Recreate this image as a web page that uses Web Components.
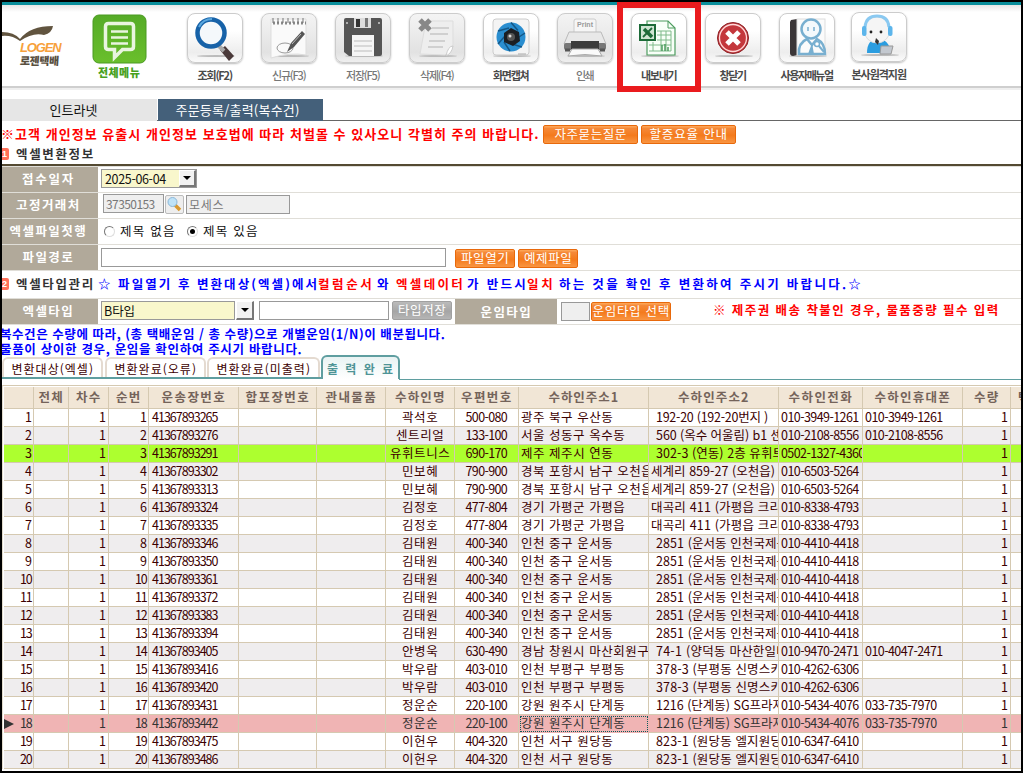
<!DOCTYPE html>
<html lang="ko">
<head>
<meta charset="utf-8">
<title>로젠택배 - 주문등록/출력</title>
<style>
html,body{margin:0;padding:0;background:#000;overflow:hidden}
body{font:12px/1 "Liberation Sans","Noto Sans CJK KR",sans-serif;color:#111}
</style>
</head>
<body>
<logen-app></logen-app>
<script>
const K = 'font-family:"Noto Sans CJK KR",sans-serif;';
function define(name, html, init) {
  const t = document.createElement('template');
  t.innerHTML = html;
  customElements.define(name, class extends HTMLElement {
    connectedCallback() {
      if (this.shadowRoot) return;
      this.attachShadow({mode: 'open'}).appendChild(t.content.cloneNode(true));
      if (init) init(this, this.shadowRoot);
    }
  });
}

/* Text spread over a fixed width through its letter spacing */
define('fit-text', `<style>:host{display:block;flex:none;white-space:pre;line-height:16px}span{display:inline-block}</style><span><slot></slot></span>`, (el, r) => {
  const w = +el.getAttribute('w');
  const s = r.querySelector('span');
  const n = [...el.textContent].length;
  if (n > 1) s.style.letterSpacing = ((w - s.getBoundingClientRect().width) / (n - .5)) + 'px';
  el.style.width = (n > 1 ? w : Math.max(w, s.getBoundingClientRect().width)) + 'px';
});

const I = {
menu:`<defs><linearGradient id="a" x2="0" y2="1"><stop stop-color="#55ab27"/><stop offset="1" stop-color="#6abf2c"/></linearGradient></defs><rect x="1" y="2" width="53" height="48" rx="6" fill="url(#a)" stroke="#4a9a22"/><path d="M14.500 11.500h22q3 0 3 3v20q0 3-3 3h-8l-8 8v-8h-6q-3 0-3-3v-20q0-3 3-3z" transform="translate(2 -1)" fill="none" stroke="#e9f5df" stroke-width="3.500"/><path d="M19 19h17M19 25h17M19 31h17" transform="translate(0 -.5)" stroke="#e9f5df" stroke-width="2.600"/>`,
find:`<path d="M38 33l9 10-5 5-9-11z" fill="#4a3a3a"/><path d="M31 32l6 6" stroke="#aaa" stroke-width="4"/><circle cx="24" cy="20" r="13.500" fill="#f4f8fb" stroke="#1762a8" stroke-width="4.500"/><path d="M12 14q4-8 13-8" fill="none" stroke="#5aa8df" stroke-width="2"/>`,
note:`<path d="M10 6h35v36q-16-3-35 3z" fill="#fafafa" stroke="#ddd"/><path d="M12 10h33" stroke="#888" stroke-width="3" stroke-dasharray="2 2"/><path d="M12 5v5M17 5v5M22 5v5M27 5v5M32 5v5M37 5v5M42 5v5" stroke="#777"/><ellipse cx="24" cy="35" rx="8" ry="5" fill="none" stroke="#999"/><path d="M26 39l4-9 11-12 3 3-11 13z" fill="#555"/><path d="M31 31l9-10" stroke="#bbb"/>`,
disk:`<path d="M11 5h34q2 0 2 2v34q0 2-2 2H14l-5-4V7q0-2 2-2z" fill="#555"/><rect x="19" y="5" width="17" height="10" fill="#ddd"/><rect x="21" y="6" width="4" height="8" fill="#333"/><rect x="30" y="5" width="3" height="9" fill="#777"/><rect x="17" y="22" width="22" height="21" fill="#f5f5f5"/><path d="M19 28h18M19 33h18M19 38h18" stroke="#bbb"/><circle cx="12" cy="10" r="1" fill="#ccc"/><circle cx="44" cy="10" r="1" fill="#ccc"/>`,
del:`<path d="M17 8h27v26l-8 8-25-1z" fill="#eee" stroke="#ddd"/><path d="M23 15h17M21 21h18M20 28h16M19 34h15" stroke="#d0d0d0" stroke-width="2"/><path d="M44 33q-5 0-7 10 6-3 7-10z" fill="#fff" stroke="#ccc"/><path d="M11 7l10 10M21 7l-10 10" stroke="#888" stroke-width="5"/>`,
cam:`<rect x="10" y="6" width="36" height="36" rx="3" fill="#f4f4f4" stroke="#ccc"/><circle cx="28" cy="24" r="14.500" fill="#2a8ed0"/><path d="M28 9.500l7 8M42 20l-9 6M39 34l-10-3M27 38l-6-9M15 31l7-8M15 18l11-3" stroke="#145786" stroke-width="1.500"/><path d="M28 15l8 4 1 9-7 5-9-4v-9z" fill="#1b1f24"/><circle cx="28" cy="24" r="4" fill="#555"/><circle cx="27" cy="23" r="1.500" fill="#ddd"/><path d="M35 41h8" stroke="#aaa"/>`,
print:`<rect x="17" y="6" width="22" height="17" rx="2" fill="#f6f6f6" stroke="#ccc"/><path d="M12 19h32l5 12H7z" fill="#e8e8e8" stroke="#bbb"/><rect x="7" y="30" width="42" height="7" rx="2" fill="#777"/><path d="M14 28h28v8H14z" fill="#3c3c3c"/><path d="M15 36h26l4 7q-17-3-34 0z" fill="#fafafa" stroke="#aaa"/><path d="M8 37h5M43 37h5" stroke="#555" stroke-width="3"/>`,
xls:`<path d="M16 8h21l7 7v27H16z" fill="#f8fff8" stroke="#4d9c5f" stroke-width="1.200"/><path d="M37 8v7h7" fill="none" stroke="#4d9c5f"/><path d="M26 18h14v20H18M26 22h14M26 27h14M18 32h22M30 18v20M35 18v20M22 29v9" fill="none" stroke="#7fba8a"/><path d="M31 38v-6M34 38v-7M37 38v-4" stroke="#4d9c5f" stroke-width="1.500"/><rect x="9" y="12" width="15" height="15" fill="#cfe5d2" stroke="#1d6b38" stroke-width="2"/><path d="M13 16l8 8" stroke="#1d6b38" stroke-width="3.500"/><path d="M21 15l-9 9" stroke="#1d6b38" stroke-width="1.800"/>`,
close:`<circle cx="28" cy="25" r="15.500" fill="#c4373c" stroke="#8b2529"/><circle cx="28" cy="25" r="13.500" fill="none" stroke="#ffd9d9" stroke-width="1.300"/><path d="M22 19l12 12M34 19l-12 12" stroke="#fff" stroke-width="5"/>`,
man:`<path d="M12 7l6-1v36l-4 1q-3 0-3-3V9z" fill="#3b3638"/><rect x="18" y="6" width="28" height="36" fill="#fbfbfb" stroke="#ddd"/><circle cx="32" cy="16" r="9.500" fill="#f4f9fc" stroke="#78afd0" stroke-width="2.500"/><path d="M29 14v4M35 14v4" stroke="#78afd0" stroke-width="1.500"/><path d="M20 41q-1-11 8-15l5 6 5-6q8 4 8 15z" fill="none" stroke="#78afd0" stroke-width="2.500"/><path d="M33 30l-4 11h6z" fill="#78afd0"/><circle cx="38" cy="31" r="2.500" fill="#fff" stroke="#78afd0" stroke-width="1.500"/><path d="M40 33l5 6" stroke="#78afd0" stroke-width="2"/>`,
help:`<path d="M16 41q0-14 11-14t13 14z" fill="#2b9de0"/><circle cx="26" cy="18" r="13" fill="#f5f5f5" stroke="#ddd"/><path d="M14 15q1-11 12-11t12 11" fill="none" stroke="#8ac9f1" stroke-width="3"/><rect x="11" y="14" width="4.500" height="10" rx="2" fill="#5cb5eb"/><rect x="37" y="14" width="4.500" height="10" rx="2" fill="#5cb5eb"/><circle cx="20" cy="20" r="1.400" fill="#222"/><circle cx="30" cy="20" r="1.400" fill="#222"/><path d="M25 26l3 3-1 4-3-3z" fill="#333"/><path d="M30 34h12l-2 8H29z" fill="#c3c8cf" stroke="#999"/>`
};
define('tool-item', `<style>
:host{display:block;flex:none;width:56px}
.b{position:relative;width:56px;height:52px}
:host(:not([plain])) .b::before{content:"";display:block;box-sizing:border-box;width:56px;height:50px;border:1px solid #ccc;border-radius:8px;background:linear-gradient(#fff 0 35%,#ededed 80%,#fbfbfb);box-shadow:0 1px 2px #bbb}
:host([dim]) .b::before{background:linear-gradient(#f4f4f4,#e2e2e2 80%,#efefef)!important}
svg{position:absolute;left:0;top:0}
.s{position:absolute;left:10px;top:42px;width:38px;height:2px;border-radius:50%;background:#bbb}
:host([plain]) .s{display:none}
.p{position:absolute;left:0;top:7px;width:56px;text-align:center;font:bold 7px/9px "Liberation Sans",sans-serif;color:#999}
.l{display:flex;justify-content:center;margin-top:2px;${K}font-size:11px;font-weight:700;color:#4a4a4a}
:host([dim]) .l{color:#777;font-weight:500}
:host([plain]) .l{color:#47a11d;margin-top:-1px;font-weight:900;padding-right:2px}
</style><div class="b"><div class="s"></div><svg width="56" height="52"></svg></div><div class="l"></div>`, (el, r) => {
  r.querySelector('svg').innerHTML = I[el.getAttribute('icon')];
  if (el.getAttribute('icon') === 'print') r.querySelector('.b').insertAdjacentHTML('beforeend', '<div class="p">Print</div>');
  r.querySelector('.l').innerHTML = `<fit-text w="${el.getAttribute('w')}">${el.getAttribute('label')}</fit-text>`;
});

define('tool-bar', `<style>
:host{display:flex;background:linear-gradient(#e6e6e6,#fff 7px);border-top:3px solid #098e9b;border-bottom:2px solid #cfcfcf;box-sizing:content-box;position:relative;height:81px;box-shadow:0 2px 0 #efefef}
.logo{width:90px;height:60px;margin-top:15px;flex:none;position:relative}
.logo svg{position:absolute;left:0;top:5px}
.n{position:absolute;left:18px;top:20px;font:italic bold 13px/16px "Liberation Sans",sans-serif;color:#f7a13b}
.k{position:absolute;left:18px;top:32px;${K}font-size:11px;font-weight:900;color:#59503f;transform:skewX(-4deg)}
.items{display:flex;gap:18px;margin:8px 0 0 39px}
tool-item[plain]{margin:8px 0 0 0}
tool-item[last]{margin:-1px 0 0 -2px}
.hl{position:absolute;left:615px;top:-3px;width:72px;height:78px;border:6px solid #ea1b1e}
</style>
<div class="logo"><svg width="56" height="20"><path d="M0 7q12 0 18 7Q28 1 51 1q-1 7-9 9-11-3-24 6Q10 10 0 11z" fill="#61543f"/></svg><fit-text class="n" w="41">LOGEN</fit-text><fit-text class="k" w="40">로젠택배</fit-text></div>
<tool-item plain icon="menu" w="42" label="전체메뉴"></tool-item>
<div class="items">
<tool-item icon="find" w="35" label="조회(F2)"></tool-item>
<tool-item dim icon="note" w="34" label="신규(F3)"></tool-item>
<tool-item dim icon="disk" w="34" label="저장(F5)"></tool-item>
<tool-item dim icon="del" w="34" label="삭제(F4)"></tool-item>
<tool-item icon="cam" w="36" label="화면캡쳐"></tool-item>
<tool-item dim icon="print" w="18" label="인쇄"></tool-item>
<tool-item icon="xls" w="36" label="내보내기"></tool-item>
<tool-item icon="close" w="27" label="창닫기"></tool-item>
<tool-item icon="man" w="53" label="사용자매뉴얼"></tool-item>
<tool-item last icon="help" w="55" label="본사원격지원"></tool-item>
</div><div class="hl"></div>`);

define('push-button', `<style>
:host{display:flex;flex:none;box-sizing:border-box;height:19px;align-items:center;justify-content:center;border:1px solid #e8690b;border-radius:2px;background:linear-gradient(#fca355 0 1px,#f58a3a 2px,#f47a1c 55%,#f99542);color:#fff;${K}font-size:12.500px;font-weight:400;padding-bottom:1px}
:host([grey]){background:linear-gradient(#bbb,#a5a5a5 55%,#b5b5b5);border-color:#a0a0a0}
</style><slot></slot>`);

define('text-box', `<style>
:host{display:flex;flex:none;box-sizing:border-box;height:19px;align-items:center;border:1px solid #999;background:#fff;padding-left:2px;${K}font-size:12px;color:#111;overflow:hidden}
:host([off]){background:#efefef;color:#777}
:host([pick]){background:#f9f7cc}
</style><slot></slot>`);

define('drop-arrow', `<style>
:host{display:flex;flex:none;box-sizing:border-box;width:17px;height:17px;align-items:center;justify-content:center;background:#f2f2f2;border:solid;border-width:1px 2px 2px 1px;border-color:#fff #777 #777 #fff}
i{border:4px solid transparent;border-top-color:#000;border-bottom:0}</style><i></i>`);

define('radio-dot', `<style>
:host{display:flex;flex:none;box-sizing:border-box;width:11px;height:11px;border:1px solid;border-color:#777 #ddd #ddd #777;border-radius:50%;background:#fff;align-items:center;justify-content:center}
i{width:5px;height:5px;border-radius:50%;background:transparent}:host([on]) i{background:#000}</style><i></i>`);

define('form-row', `<style>
:host{display:flex;height:25px;border-bottom:1px solid #e0ded8;background:#fff}
.l{display:flex;flex:none;width:96px;align-items:center;justify-content:center;background:#b1a99a;color:#fff;${K}font-size:12.500px;font-weight:700;padding-bottom:2px;box-sizing:border-box;padding-right:4px}
.c{display:flex;flex:1;align-items:flex-start;padding-left:3px;${K}}
</style><div class="l"><slot name="label"></slot></div><div class="c"><slot></slot></div>`);

define('section-head', `<style>
:host{display:flex;align-items:center;box-sizing:border-box;position:relative;${K}font-weight:700;font-size:12.500px;color:#333}
.n{width:7px;height:12px;flex:none;background:#ff7059;border-radius:0 2px 2px 0;color:#fff;display:flex;justify-content:flex-end;font:bold 9px/12px "Liberation Sans",sans-serif;margin-right:7px;box-sizing:border-box;padding-right:2px}
</style><div class="n"></div><slot></slot>`, (el, r) => r.querySelector('.n').textContent = el.getAttribute('no'));

define('result-tab', `<style>
:host{display:flex;flex:none;box-sizing:border-box;height:20px;align-items:center;justify-content:center;border:2px solid #e4dad0;border-bottom:0;border-radius:6px 6px 0 0;background:#fff;color:#3c0000;${K}font-size:12px;padding-top:2px}
:host([on]){height:24px;border-color:#5f9ea0;background:linear-gradient(#e9f3f3,#fff);color:#4f9496;font-weight:700;padding-top:2px}
</style><slot></slot>`);

const COLS = [[30,''],[35,'전체',25],[40,'차수',25],[40,'순번',25],[90,'운송장번호',64],[78,'합포장번호',64],[69,'관내물품',51],[69,'수하인명',50],[64,'우편번호',51],[130,'수하인주소1',70],[130,'수하인주소2',71],[84,'수하인전화',64],[100,'수하인휴대폰',76],[48,'수량',25],[11,'택배',25]];
const gw = ['인천 중구 운서동','2851 (운서동 인천국제공항)','010-4410-4418',''];
const ROWS = [
['265','곽석호','500-080','광주 북구 우산동','192-20 (192-20번지 )','010-3949-1261','010-3949-1261'],
['276','센트리얼','133-100','서울 성동구 옥수동','560 (옥수 어울림) b1 센','010-2108-8556','010-2108-8556'],
['291','유휘트니스','690-170','제주 제주시 연동','302-3 (연동) 2층 유휘트','0502-1327-4360',''],
['302','민보혜','790-900','경북 포항시 남구 오천읍','세계리 859-27 (오천읍)','010-6503-5264',''],
['313','민보혜','790-900','경북 포항시 남구 오천읍','세계리 859-27 (오천읍)','010-6503-5264',''],
['324','김정호','477-804','경기 가평군 가평읍','대곡리 411 (가평읍 크리','010-8338-4793',''],
['335','김정호','477-804','경기 가평군 가평읍','대곡리 411 (가평읍 크리','010-8338-4793',''],
...['346','350','361','372','383','394'].map(n => [n,'김태원','400-340',...gw]),
['405','안병욱','630-490','경남 창원시 마산회원구','74-1 (양덕동 마산한일타','010-9470-2471','010-4047-2471'],
['416','박우람','403-010','인천 부평구 부평동','378-3 (부평동 신명스카','010-4262-6306',''],
['420','박우람','403-010','인천 부평구 부평동','378-3 (부평동 신명스카','010-4262-6306',''],
['431','정운순','220-100','강원 원주시 단계동','1216 (단계동) SG프라자','010-5434-4076','033-735-7970'],
['442','정운순','220-100','강원 원주시 단계동','1216 (단계동) SG프라자','010-5434-4076','033-735-7970'],
['475','이헌우','404-320','인천 서구 원당동','823-1 (원당동 엘지원당','010-6347-6410',''],
['486','이헌우','404-320','인천 서구 원당동','823-1 (원당동 엘지원당','010-6347-6410','']];
const width = s => [...s].reduce((a, c) => a + (/[가-힣]/.test(c) ? 12 : /[ ()]/.test(c) ? 4 : /[A-Z]/.test(c) ? 8 : 6), 0);
define('order-grid', `<style>
:host{display:block;margin-top:5px;border-top:1px solid #d5c9b1;border-left:1px solid #e3dccd;padding:1px 0 0 1px;${K}font-size:12.500px;color:#3c0000}
.r{display:grid;grid-template-columns:${COLS.map(c => c[0] + 'px').join(' ')};height:18px;background:#fff}
.c{display:flex;align-items:center;overflow-x:clip;overflow-y:visible;box-sizing:border-box;border-right:1px solid #d5c9b1;border-bottom:1px solid #d5c9b1;padding:0 2px;min-width:0}
.h{height:22px;background:#f1e6d6;color:#74635a;font-weight:700;font-size:12.500px}
.h .c{justify-content:center}.h .c:last-child{justify-content:flex-start;padding-left:7px}
.r .c:last-child{border-right:0}
.e{background:#efedee}.g{background:#adff2f}.s{background:#f0b4b4;color:#333}
.e2{justify-content:flex-end}.m{justify-content:center}
.c fit-text{margin-top:-2px}
.f{border:1px dotted #0c5a5a;margin:1px 1px 1px 1px;padding:0}
.a{border:solid transparent;border-width:5px 0 5px 10px;border-left-color:#333;margin-left:-2px;margin-right:auto}
</style>`, (el, r) => {
  const fit = (t, w) => t ? `<fit-text w="${w || width(t)}">${t}</fit-text>` : '';
  let h = '<div class="r h">' + COLS.map(c => `<div class="c">${fit(c[1], c[2])}</div>`).join('') + '</div>';
  ROWS.forEach((d, i) => {
    const n = i + 1, sel = n === 18;
    const cell = (t, cls = '', st = '') => `<div class="c ${cls}" style="${st}">${fit(t)}</div>`;
    h += `<div class="r ${n === 3 ? 'g' : sel ? 's' : n % 2 ? '' : 'e'}"><div class="c e2" style="padding-right:1px">${sel ? '<i class="a"></i>' : ''}${fit('' + n)}</div>`
      + cell('') + cell('1','e2') + cell('' + n,'e2','padding-right:1px') + cell('41367893' + d[0],'','padding-left:3px') + cell('') + cell('')
      + cell(d[1],'m') + cell(d[2],'m') + cell(d[3], sel ? 'f' : '', '')
      + cell(d[4],'', /^\d/.test(d[4]) ? 'padding-left:7px' : '') + cell(d[5]) + cell(d[6]) + cell('1','e2') + cell('') + '</div>';
  });
  r.innerHTML += h;
});

define('logen-app', `<style>
:host{display:block;box-sizing:border-box;width:1023px;height:773px;border:2px solid #000;background:#fff;overflow:hidden}
.tabs{display:flex;height:22px;margin-top:11px;position:relative;font-size:13px;${K}background:linear-gradient(#666,#666) 0 21px/100% 1px no-repeat}
.tabs div{display:flex;align-items:center;justify-content:center;height:22px}
.t1{width:155px;background:#e6e6e6;margin-right:1px;box-sizing:border-box;padding-right:12px}.t2{width:165px;background:#44607a;color:#fff;box-sizing:border-box;padding-right:6px}
.warn{display:flex;height:26px;align-items:center;${K}font-weight:700;color:#f00;font-size:13px}
.blue{color:#00f}.red{color:#f00}
.dark{height:2px;background:#544a32;border-bottom:1px solid #e0ded8}
.msg{${K}font-weight:700;color:#00f;font-size:12.500px;height:28px;padding-top:1px}
.msg fit-text{line-height:15px;margin-left:-2px}
.rt{display:flex;align-items:flex-end;height:26px;background:linear-gradient(#5f9ea0,#5f9ea0) 0 23px/320px 2px no-repeat,linear-gradient(#5f9ea0,#5f9ea0) 397px 25px/700px 1px no-repeat}
.rt result-tab{margin-bottom:3px}.rt result-tab[on]{margin-bottom:1px}
.lab{display:flex;align-items:center;justify-content:center;width:102px;height:25px;background:#b1a99a;color:#fff;font-size:12.500px;font-weight:700;margin:0 4px 0 3px;padding-bottom:0}
.mag{display:flex;box-sizing:border-box;width:19px;height:19px;border:1px solid #bbb;border-radius:2px;background:#eee;margin:2px 2px 0 1px}
</style>
<tool-bar></tool-bar>
<div class="tabs"><div class="t1"><fit-text w="48">인트라넷</fit-text></div><div class="t2"><fit-text w="124">주문등록/출력(복수건)</fit-text></div></div>
<div class="warn"><fit-text w="538" style="margin-left:-1px;margin-right:4px">※고객 개인정보 유출시 개인정보 보호법에 따라 처벌몰 수 있사오니 각별히 주의 바랍니다.</fit-text><push-button style="width:95px;margin-right:3px"><fit-text w="72">자주묻는질문</fit-text></push-button><push-button style="width:95px"><fit-text w="78">할증요율 안내</fit-text></push-button></div>
<section-head no="1" style="height:17px;padding-bottom:3px"><fit-text w="78">엑셀변환정보</fit-text></section-head>
<div class="dark"></div>
<form-row><fit-text slot="label" w="52">접수일자</fit-text>
 <text-box pick style="width:96px;margin-top:2px"><fit-text w="61" style="margin-left:1px;font-size:12.500px">2025-06-04</fit-text><drop-arrow style="margin-left:13px"></drop-arrow></text-box></form-row>
<form-row><fit-text slot="label" w="64">고정거래처</fit-text>
 <text-box off style="width:61px;margin-left:2px;margin-top:1px"><fit-text w="49">37350153</fit-text></text-box>
 <span class="mag"><svg width="17" height="17"><path d="M9 9l5 5" stroke="#d99a32" stroke-width="3.500"/><circle cx="6.500" cy="6" r="4.500" fill="#bfe3f8" stroke="#8bb7d8"/></svg></span>
 <text-box off style="width:104px;margin-top:2px"><fit-text w="35">모세스</fit-text></text-box></form-row>
<form-row><fit-text slot="label" w="77">엑셀파일첫행</fit-text>
 <radio-dot style="margin:7px 5px 0 3px"></radio-dot><fit-text w="55" style="margin-top:4px;font-size:12.500px">제목 없음</fit-text><radio-dot on style="margin:7px 5px 0 12px"></radio-dot><fit-text w="55" style="margin-top:4px;font-size:12.500px">제목 있음</fit-text></form-row>
<form-row><fit-text slot="label" w="51">파일경로</fit-text>
 <text-box style="width:345px;margin:3px 9px 0 0"></text-box><push-button style="width:60px;margin:4px 3px 0 0"><fit-text w="48">파일열기</fit-text></push-button><push-button style="width:60px;margin-top:4px"><fit-text w="48">예제파일</fit-text></push-button></form-row>
<section-head no="2" style="height:28px;padding-bottom:1px;border-bottom:1px solid #e0ded8"><fit-text w="78">엑셀타입관리</fit-text><fit-text class="blue" w="220" style="margin-left:4px">☆ 파일열기 후 변환대상(엑셀)에서</fit-text><fit-text class="red" w="55">컬럼순서</fit-text><fit-text class="blue" w="14" style="margin-left:4px">와</fit-text><fit-text class="red" w="68" style="margin-left:5px">엑셀데이터</fit-text><fit-text class="blue" w="60" style="margin-left:3px">가 반드시</fit-text><fit-text class="red" w="27">일치</fit-text><fit-text class="blue" w="303" style="margin-left:5px">하는 것을 확인 후 변환하여 주시기 바랍니다.☆</fit-text></section-head>
<form-row><fit-text slot="label" w="51">엑셀타입</fit-text>
 <text-box pick style="width:134px;margin:2px 1px 0 0;font-size:12.500px"><fit-text w="31">B타입</fit-text></text-box><drop-arrow style="width:18px;height:19px;margin:2px 5px 0 0"></drop-arrow><text-box style="width:130px;margin:2px 3px 0 0"></text-box><push-button grey style="width:60px;margin-top:2px"><fit-text w="48">타입저장</fit-text></push-button><div class="lab"><fit-text w="51">운임타입</fit-text></div><text-box off style="width:29px;margin:3px 1px 0 0"></text-box><push-button style="width:80px;margin:3px 42px 0 0"><fit-text w="77">운임타입 선택</fit-text></push-button><fit-text class="red" w="286" style="margin-top:3px;font-weight:700;font-size:12.500px">※ 제주권 배송 착불인 경우, 물품중량 필수 입력</fit-text></form-row>
<div class="msg"><fit-text w="445">복수건은 수량에 따라, (총 택배운임 / 총 수량)으로 개별운임(1/N)이 배분됩니다.</fit-text><fit-text w="302">물품이 상이한 경우, 운임을 확인하여 주시기 바랍니다.</fit-text></div>
<div class="rt"><result-tab style="width:101px;margin-right:2px"><fit-text w="82">변환대상(엑셀)</fit-text></result-tab><result-tab style="width:101px;margin-right:1px"><fit-text w="82">변환완료(오류)</fit-text></result-tab><result-tab style="width:113px;margin-right:1px"><fit-text w="94">변환완료(미출력)</fit-text></result-tab><result-tab on style="width:79px"><fit-text w="67">출 력 완 료</fit-text></result-tab></div>
<order-grid></order-grid>`);
</script>
</body>
</html>
